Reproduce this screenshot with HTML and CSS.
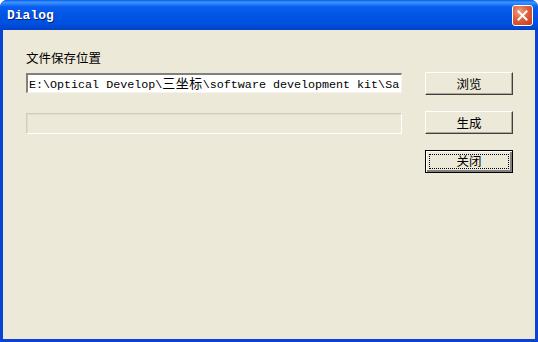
FILE: index.html
```html
<!DOCTYPE html>
<html lang="zh">
<head>
  <meta charset="UTF-8" />
  <title>Dialog</title>
  <link rel="stylesheet" href="styles.css">
</head>
<body>
  <div class="window">
    <div class="titlebar">
      <span class="title">Dialog</span>
      <button class="close-btn" aria-label="close">
        <svg width="11" height="11" viewBox="0 0 11 11">
          <path d="M1.5 1.5 L9.5 9.5 M9.5 1.5 L1.5 9.5" stroke="#fff" stroke-width="2" stroke-linecap="square"/>
        </svg>
      </button>
    </div>

    <div class="client">
      <div class="label">文件保存位置</div>
      <div class="rows">
        <div class="left">
          <div class="edit">E:\Optical Develop\<span class="cjk">三坐标</span>\software development kit\Sa</div>
          <div class="progress"></div>
        </div>
        <div class="buttons">
          <button class="btn">浏览</button>
          <button class="btn">生成</button>
          <button class="btn default"><span class="focus">关闭</span></button>
        </div>
      </div>
    </div>
  </div>
</body>
</html>
```

FILE: styles.css
```css
:root {
  --face: #ece9d8;
  --frame: #0842d6;
}
* {
  box-sizing: border-box;
}
body {
  margin: 0;
  background: #fff;
  font-family: "Noto Sans CJK SC", "Noto Sans", sans-serif;
}
.window {
  width: 538px;
  height: 342px;
  display: flex;
  flex-direction: column;
  background: var(--frame);
  border-radius: 7px 7px 0 0;
  overflow: hidden;
}
.titlebar {
  height: 30px;
  flex: none;
  display: flex;
  align-items: center;
  justify-content: space-between;
  padding: 0 5px 0 7px;
  background: linear-gradient(to bottom, #0a5fe8 0%, #3d95ff 8%, #0a5ff0 22%, #0055e5 50%, #0050df 80%, #0040c8 100%);
}
.title {
  color: #fff;
  font-family: "Liberation Mono", monospace;
  font-weight: bold;
  font-size: 13px;
  text-shadow: 1px 1px 0 #0a1e6e;
}
.close-btn {
  width: 21px;
  height: 21px;
  padding: 0;
  border: 1px solid #fff;
  border-radius: 3px;
  background: radial-gradient(circle at 35% 30%, #f0a080 0%, #e0603a 45%, #c33a1a 100%);
  display: flex;
  align-items: center;
  justify-content: center;
}
.client {
  flex: 1;
  margin: 0 3px 3px 3px;
  background: var(--face);
  padding: 20px 0 0 23px;
}
.label {
  font-size: 12.5px;
  line-height: 16px;
  color: #000;
}
.rows {
  display: flex;
  margin-top: 6px;
}
.left {
  width: 376px;
  display: flex;
  flex-direction: column;
  gap: 20px;
  padding-top: 1px;
}
.edit {
  height: 20px;
  background: #fff;
  border-top: 2px solid #808080;
  border-left: 2px solid #808080;
  border-right: 1px solid #f4f3ee;
  border-bottom: 1px solid #f4f3ee;
  font-family: "Liberation Mono", monospace;
  font-size: 11.7px;
  line-height: 15px;
  white-space: nowrap;
  overflow: hidden;
  padding-left: 1px;
  color: #000;
}
.cjk {
  font-family: "Noto Sans CJK SC", sans-serif;
  font-size: 13px;
  letter-spacing: 0.5px;
}
.progress {
  height: 21px;
  border: 1px solid #d0cec0;
  border-right-color: #fff;
  border-bottom-color: #fff;
  box-shadow: inset 1px 1px 0 #e0ddd0;
}
.buttons {
  margin-left: 23px;
  display: flex;
  flex-direction: column;
  gap: 16px;
}
.btn {
  width: 88px;
  height: 23px;
  padding: 0;
  background: var(--face);
  border: 1px solid;
  border-color: #fff #404040 #404040 #fff;
  box-shadow: inset -1px -1px 0 #aca899;
  font-family: "Noto Sans CJK SC", sans-serif;
  font-size: 12.5px;
  color: #000;
  display: flex;
  align-items: center;
  justify-content: center;
}
.btn.default {
  border: 1px solid #000;
  box-shadow: inset 1px 1px 0 #fff, inset -2px -2px 0 #808080;
}
.focus {
  width: 80px;
  height: 15px;
  border: 1px dotted #000;
  display: flex;
  align-items: center;
  justify-content: center;
  line-height: 1;
}
```
